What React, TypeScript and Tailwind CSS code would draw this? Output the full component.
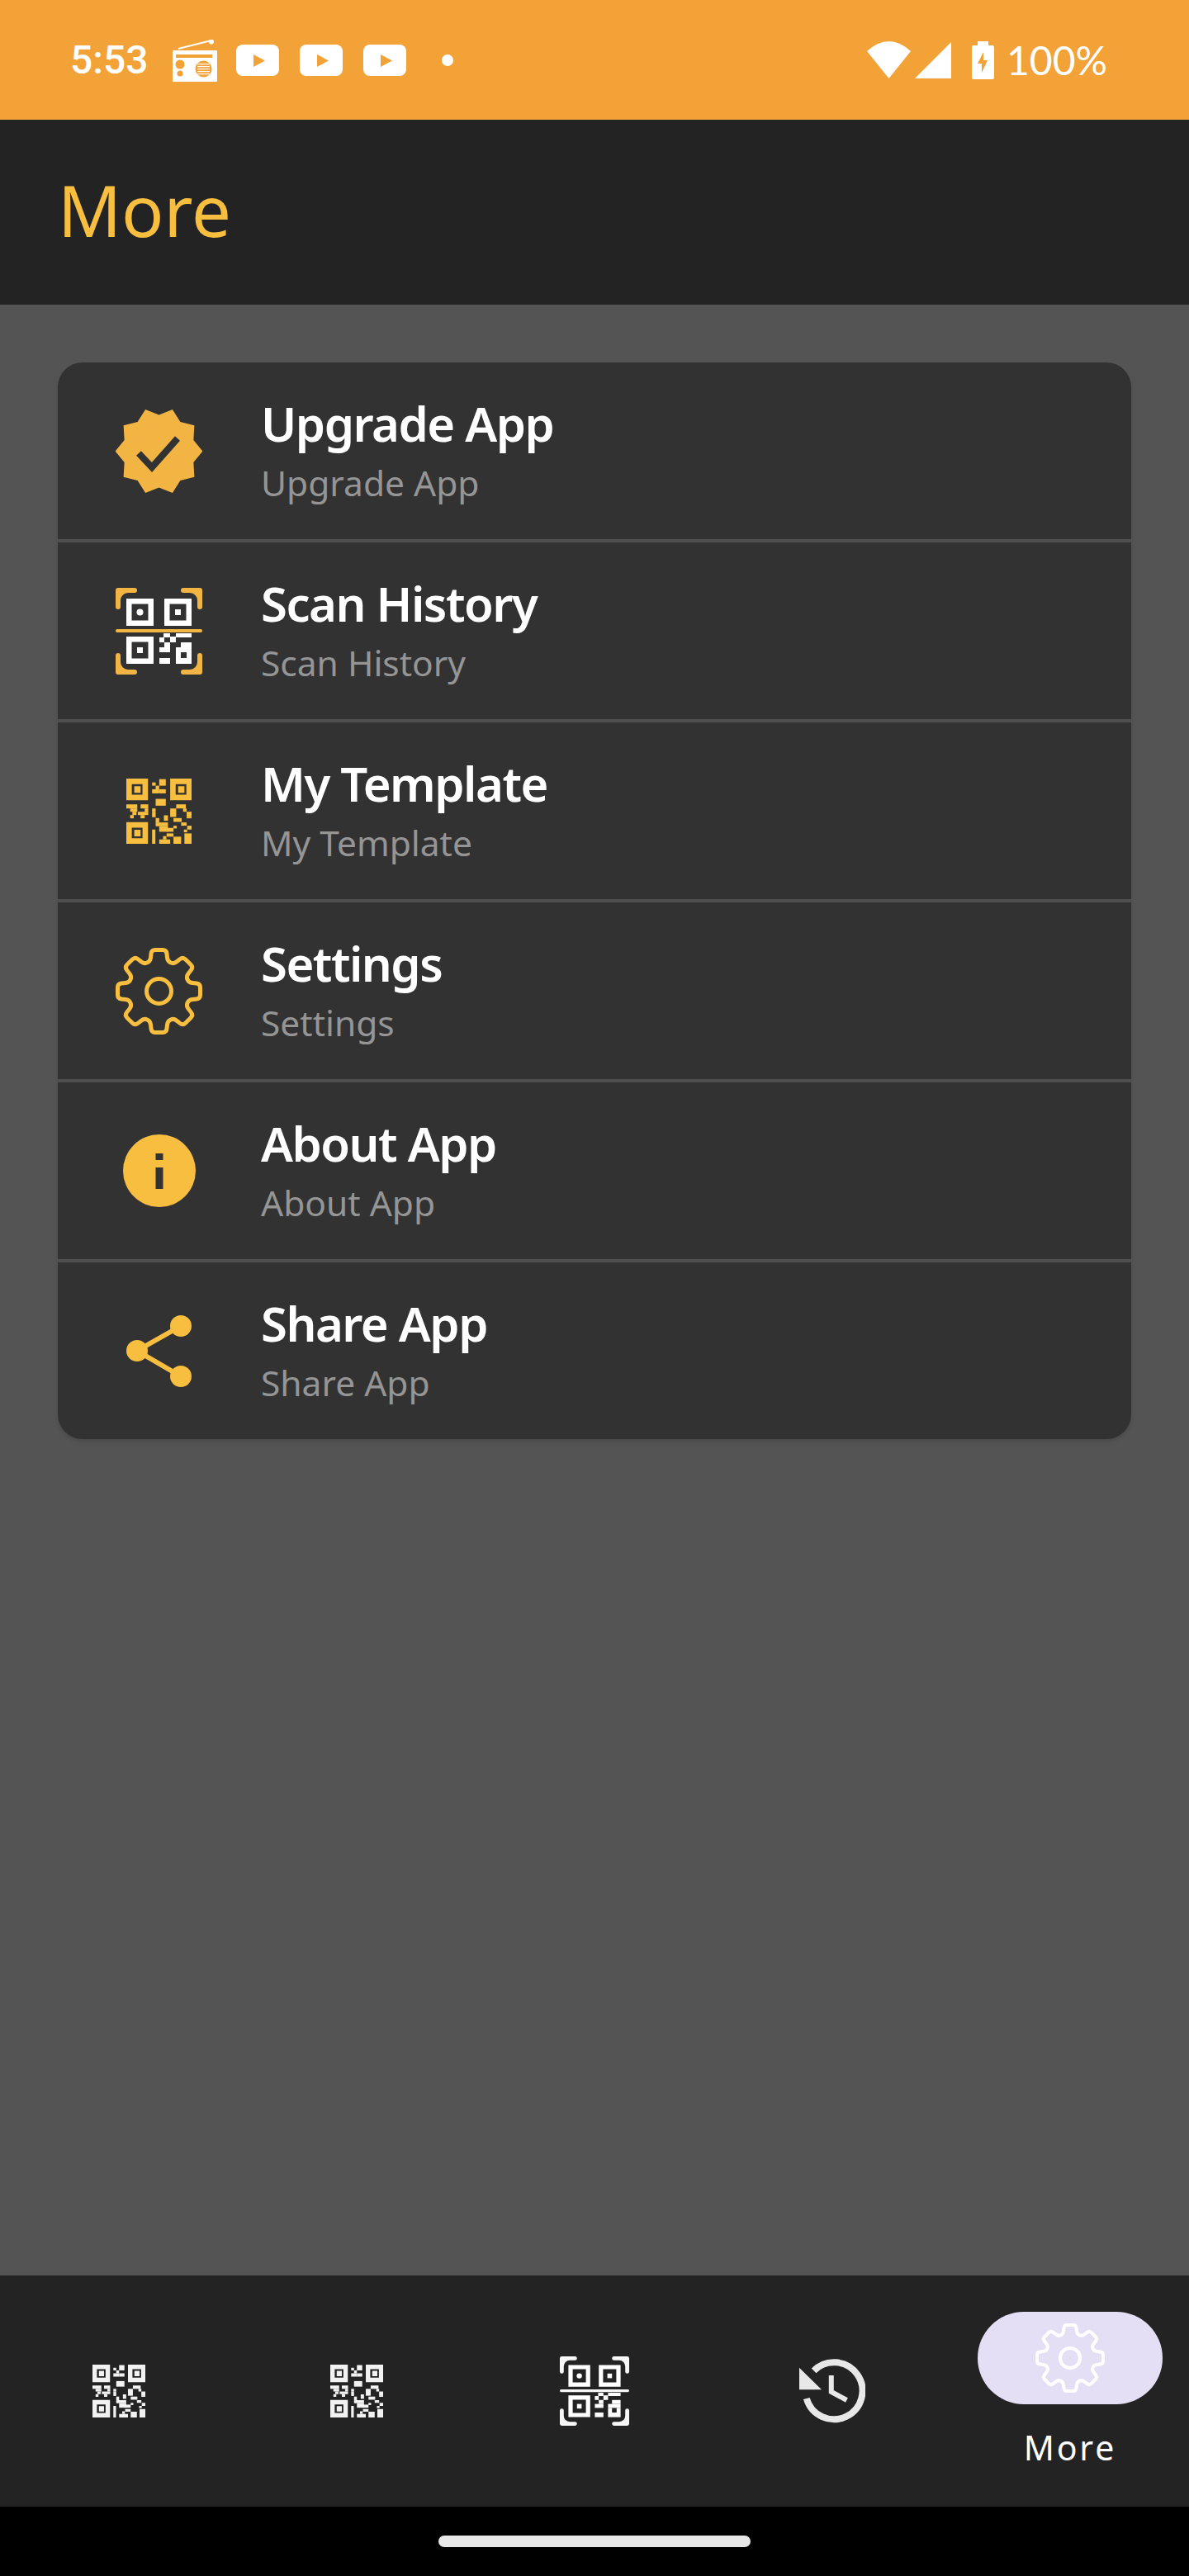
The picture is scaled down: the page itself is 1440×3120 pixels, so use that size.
import React from "react";

const AMBER = "#F7BE3F";
const AMBER_SOFT = "#F2B544";
const ORANGE = "#F3A237";
const CARD = "#323232";

// rounds the corners of a closed polygon, used for the gear teeth
const roundedPath = (pts: number[][], r: number) => {
  let d = "";
  pts.forEach((p, i) => {
    const prev = pts[(i - 1 + pts.length) % pts.length];
    const next = pts[(i + 1) % pts.length];
    const toward = (q: number[]) => {
      const len = Math.hypot(q[0] - p[0], q[1] - p[1]);
      const t = Math.min(r, len / 2) / len;
      return [p[0] + (q[0] - p[0]) * t, p[1] + (q[1] - p[1]) * t];
    };
    const a = toward(prev);
    const b = toward(next);
    d += `${i === 0 ? "M" : "L"}${a[0].toFixed(2)} ${a[1].toFixed(2)}Q${p[0].toFixed(2)} ${p[1].toFixed(2)} ${b[0].toFixed(2)} ${b[1].toFixed(2)}`;
  });
  return d + "Z";
};

const gearPath = (() => {
  const pts: number[][] = [];
  for (let i = 0; i < 8; i++) {
    const a = ((i * 45 - 90) * Math.PI) / 180;
    const local = [
      [36, -10.5],
      [50, -9],
      [50, 9],
      [36, 10.5],
    ];
    local.forEach(([d, s]) => {
      pts.push([52.5 + d * Math.cos(a) - s * Math.sin(a), 52.5 + d * Math.sin(a) + s * Math.cos(a)]);
    });
  }
  return roundedPath(pts, 4.5);
})();

const badgePoints = Array.from({ length: 20 }, (_, i) => {
  const a = ((i * 18 - 72) * Math.PI) / 180;
  const r = i % 2 === 0 ? 53 : 44;
  return `${(52.5 + r * Math.cos(a)).toFixed(2)},${(50.5 + r * Math.sin(a)).toFixed(2)}`;
}).join(" ");

const Gear = ({ color, className }: { color: string; className: string }) => (
  <svg viewBox="0 0 105 105" className={className} fill="none" stroke={color} strokeWidth="5">
    <path d={gearPath} />
    <circle cx="52.5" cy="52.5" r="15" />
  </svg>
);

const BadgeIcon = () => (
  <svg viewBox="0 0 105 101" className="w-[105px] h-[101px]">
    <polygon points={badgePoints} fill={AMBER_SOFT} />
    <path d="M28 53 44 70 75 35" fill="none" stroke={CARD} strokeWidth="8" />
  </svg>
);

const qrCells = [
  [218, 98, 24, 24], [192, 110, 13, 12], [205, 122, 13, 13], [192, 135, 26, 15], [218, 135, 24, 15],
  [205, 170, 37, 25],
  [98, 190, 40, 15], [150, 190, 28, 15], [112, 205, 26, 12], [165, 205, 13, 12],
  [192, 205, 13, 12], [258, 205, 22, 15], [280, 190, 35, 15], [305, 205, 13, 12],
  [120, 217, 15, 12], [140, 217, 38, 12], [192, 217, 13, 20], [318, 217, 18, 20], [258, 218, 22, 18],
  [112, 229, 13, 12], [150, 229, 15, 12], [235, 230, 15, 20], [270, 240, 30, 14], [318, 237, 18, 4],
  [205, 240, 13, 16], [205, 256, 45, 14], [218, 270, 32, 20], [298, 256, 20, 12], [245, 276, 25, 14],
  [270, 268, 12, 10], [320, 268, 16, 14], [308, 282, 12, 10],
  [192, 282, 12, 52], [245, 296, 25, 12], [218, 318, 40, 16], [232, 306, 12, 12],
  [270, 308, 28, 26], [310, 296, 26, 38],
];

const QrIcon = ({ color, className }: { color: string; className: string }) => (
  <svg viewBox="98 96 238 238" className={className}>
    <g fill={color}>
      {[[98, 96], [258, 96], [98, 255]].map(([x, y]) => (
        <path
          key={`${x}-${y}`}
          fillRule="evenodd"
          d={`M${x} ${y}h79v79h-79zM${x + 20} ${y + 20}v39h39v-39zM${x + 29} ${y + 28}h23v24h-23z`}
        />
      ))}
      {qrCells.map(([x, y, w, h], i) => (
        <rect key={i} x={x} y={y} width={w} height={h} />
      ))}
    </g>
  </svg>
);

const scanCells = [
  [58, 55, 8, 5], [73, 55, 19, 5], [53, 60, 6, 6], [66, 59, 7, 7], [59, 66, 7, 6],
  [79, 66, 13, 6], [53, 72, 13, 6], [73, 72, 19, 6], [73, 78, 6, 7], [86, 78, 6, 7],
  [53, 85, 13, 7], [73, 85, 19, 7],
];

const ScanIcon = ({ corner, className }: { corner: string; className: string }) => (
  <svg viewBox="0 0 105 105" className={className}>
    <g fill={corner}>
      {["", "translate(105 0) scale(-1 1)", "translate(0 105) scale(1 -1)", "translate(105 105) scale(-1 -1)"].map((t) => (
        <path key={t} transform={t} d="M3 0H23a3 3 0 0 1 0 6H15a9 9 0 0 0-9 9v8a3 3 0 0 1-6 0V3a3 3 0 0 1 3-3z" />
      ))}
      <rect x="0" y="50" width="105" height="4" rx="2" />
    </g>
    <g fill="#fff">
      <path fillRule="evenodd" d="M13 13h33v33h-33zM19.5 19.500v20h20v-20z" />
      <circle cx="29.500" cy="29.500" r="4" />
      <path fillRule="evenodd" d="M59 13h33v33h-33zM65.500 19.500v20h20v-20z" />
      <rect x="72" y="26" width="7" height="7" />
      <path fillRule="evenodd" d="M13 59h33v33h-33zM19.500 65.500v20h20v-20z" />
      <rect x="26" y="72" width="7" height="7" />
      {scanCells.map(([x, y, w, h], i) => (
        <rect key={i} x={x} y={y} width={w} height={h} />
      ))}
    </g>
  </svg>
);

const InfoIcon = () => (
  <svg viewBox="0 0 88 88" className="w-[88px] h-[88px]">
    <circle cx="44" cy="44" r="44" fill={AMBER} />
    <rect x="39.500" y="23" width="9" height="8" fill={CARD} />
    <rect x="39.500" y="40" width="9" height="26" fill={CARD} />
  </svg>
);

const ShareIcon = () => (
  <svg viewBox="0 0 79 87" className="w-[79px] h-[87px]">
    <path d="M66 13 13 43 66 74" fill="none" stroke={AMBER} strokeWidth="6" />
    <circle cx="66" cy="13" r="13" fill={AMBER} />
    <circle cx="13" cy="43" r="13" fill={AMBER} />
    <circle cx="66" cy="74" r="13" fill={AMBER} />
  </svg>
);

const HistoryIcon = () => (
  <svg viewBox="0 0 80 78" className="w-[80px] h-[78px]">
    <path d="M8.800 48A34.500 34.500 0 1 0 17.600 14.300" fill="none" stroke="#e8e8e8" strokeWidth="8" />
    <path d="M0 10.700V37.300H27z" fill="#e8e8e8" />
    <path d="M38.800 20V40L57.500 50" fill="none" stroke="#e8e8e8" strokeWidth="6" />
  </svg>
);

const RadioIcon = () => (
  <svg viewBox="0 0 56 52" className="w-[56px] h-[52px]">
    <path d="M8 11 48 1" stroke="#fff" strokeWidth="2" />
    <circle cx="48" cy="2.500" r="3" fill="#fff" />
    <rect x="1" y="13" width="54" height="38" rx="1" fill="#fff" />
    <rect x="5" y="18" width="44" height="4" fill={ORANGE} />
    <circle cx="10" cy="30" r="5.500" fill={ORANGE} />
    <circle cx="10" cy="41" r="3.500" fill={ORANGE} />
    <circle cx="38.500" cy="35.500" r="10" fill={ORANGE} />
    {[29, 32, 35, 38, 41].map((y) => (
      <rect key={y} x="31" y={y} width="15" height="1.200" fill="#fff" />
    ))}
  </svg>
);

const YoutubeIcon = () => (
  <svg viewBox="0 0 52 38" className="w-[52px] h-[38px]">
    <rect width="52" height="38" rx="8" fill="#fff" />
    <path d="M21 12 35 19.500 21 27z" fill={ORANGE} />
  </svg>
);

const WifiIcon = () => (
  <svg viewBox="0 0 53 45" className="w-[53px] h-[45px]">
    <path d="M0 12Q26.500-12 53 12L26.500 45z" fill="#fff" />
  </svg>
);

const SignalIcon = () => (
  <svg viewBox="0 0 44 44" className="w-[44px] h-[44px]">
    <path d="M44 0V44H0z" fill="#fff" />
  </svg>
);

const BatteryIcon = () => (
  <svg viewBox="0 0 27 46" className="w-[27px] h-[46px]">
    <path d="M7 0H20V5H25a2 2 0 0 1 2 2V44a2 2 0 0 1-2 2H2a2 2 0 0 1-2-2V7a2 2 0 0 1 2-2H7z" fill="#fff" />
    <path d="M14 13 7 27H12L12 38 19 23H14z" fill={ORANGE} />
  </svg>
);

const rows = [
  { title: "Upgrade App", icon: <BadgeIcon /> },
  { title: "Scan History", icon: <ScanIcon corner={AMBER_SOFT} className="w-[105px] h-[105px]" /> },
  { title: "My Template", icon: <QrIcon color={AMBER} className="w-[79px] h-[79px]" /> },
  { title: "Settings", icon: <Gear color={AMBER} className="w-[105px] h-[105px]" /> },
  { title: "About App", icon: <InfoIcon /> },
  { title: "Share App", icon: <ShareIcon /> },
];

const App: React.FC = () => {
  return (
    <div className="w-[1440px] h-[3120px] flex flex-col bg-black overflow-hidden font-['Noto_Sans',sans-serif]">
      {/* status bar */}
      <div className="h-[145px] shrink-0 bg-[#F3A237] flex items-center pl-[85px] pr-[99px] text-white">
        <span className="font-['Roboto',sans-serif] text-[48px] leading-[48px] w-[94px] font-medium">5:53</span>
        <div className="ml-[29px] mb-[-2px]">
          <RadioIcon />
        </div>
        <div className="ml-[22px] flex gap-[25px]">
          <YoutubeIcon />
          <YoutubeIcon />
          <YoutubeIcon />
        </div>
        <div className="ml-[43px] w-[14px] h-[14px] rounded-full bg-white" />
        <div className="ml-auto flex items-center">
          <WifiIcon />
          <div className="ml-[5px]">
            <SignalIcon />
          </div>
          <div className="ml-[25px]">
            <BatteryIcon />
          </div>
          <span className="ml-[15px] font-['Lato',sans-serif] text-[48px] leading-[48px]">100%</span>
        </div>
      </div>

      {/* header */}
      <div className="h-[224px] shrink-0 bg-[#232323] flex items-center pl-[70px] pb-[6px]">
        <h1 className="text-[85px] leading-[100px] font-normal text-[#F7BE3F]">More</h1>
      </div>

      {/* menu */}
      <div className="flex-1 bg-[#545454] px-[70px] pt-[70px]">
        <div className="rounded-[30px] bg-[#4f4f4f] shadow-md overflow-hidden flex flex-col gap-[4px]">
          {rows.map((row) => (
            <div key={row.title} className="h-[214px] flex items-center pl-[70px] bg-[#323232]">
              <div className="w-[105px] flex justify-center">{row.icon}</div>
              <div className="ml-[71px] flex flex-col">
                <span className="text-[58px] leading-[72px] tracking-[-1.5px] font-semibold text-white">{row.title}</span>
                <span className="mt-[6px] text-[42.5px] leading-[60px] text-[#959595]">{row.title}</span>
              </div>
            </div>
          ))}
        </div>
      </div>

      {/* bottom nav */}
      <div className="h-[280px] shrink-0 bg-[#232323] grid grid-cols-5 items-center">
        <div className="flex justify-center">
          <QrIcon color="#f2f2f2" className="w-[64px] h-[64px]" />
        </div>
        <div className="flex justify-center">
          <QrIcon color="#f2f2f2" className="w-[64px] h-[64px]" />
        </div>
        <div className="flex justify-center">
          <ScanIcon corner="#f7f7f7" className="w-[84px] h-[84px]" />
        </div>
        <div className="flex justify-center">
          <HistoryIcon />
        </div>
        <div className="flex flex-col items-center">
          <div className="w-[224px] h-[112px] rounded-full bg-[#E4DFF5] flex items-center justify-center">
            <Gear color="#ffffff" className="w-[84px] h-[84px]" />
          </div>
          <span className="mt-[24px] text-[41px] leading-[56px] tracking-[0.07em] text-white">More</span>
        </div>
      </div>

      {/* gesture bar */}
      <div className="h-[84px] shrink-0 bg-black flex justify-center pt-[35px]">
        <div className="w-[378px] h-[14px] rounded-full bg-[#e8e8e8]" />
      </div>
    </div>
  );
};

export default App;
